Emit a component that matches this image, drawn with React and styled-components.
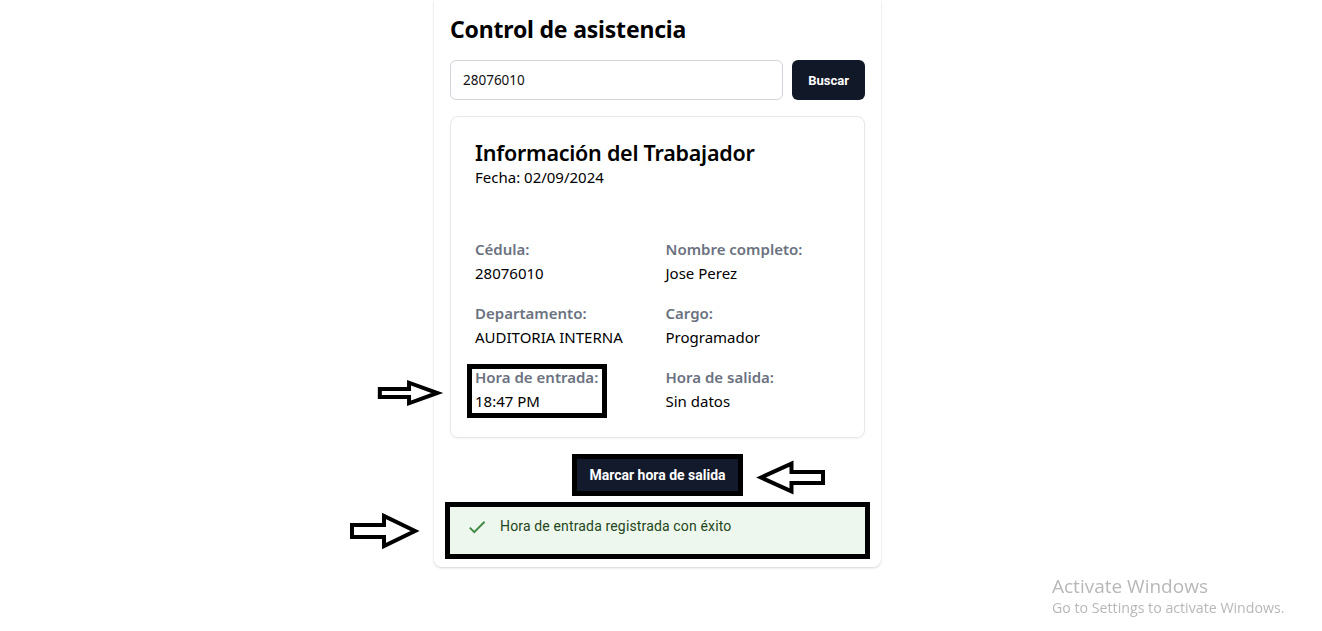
import styled, { createGlobalStyle } from 'styled-components'

//********************************************************//
/* ********************************************************* */
//Global + layout
/* ********************************************************* */

const GlobalStyle = createGlobalStyle`
  html, body {
    margin: 0;
    padding: 0;
    background: #ffffff;
  }
  body {
    font-family: "Noto Sans", "Open Sans", sans-serif;
    color: #000;
  }
`

const Page = styled.div`
  display: flex;
  justify-content: center;
  padding-right: 7px;
  min-height: 631px;
  box-sizing: border-box;
`

const Panel = styled.div`
  width: 447px;
  box-sizing: border-box;
  padding: 13px 16px 13px;
  background: #fff;
  border-radius: 0 0 8px 8px;
  box-shadow: 0 1px 3px rgba(0, 0, 0, 0.12), 0 1px 2px rgba(0, 0, 0, 0.06);
  display: flex;
  flex-direction: column;
  align-self: flex-start;
`

const Title = styled.h1`
  margin: 0;
  font-size: 23px;
  line-height: 32px;
  font-weight: 700;
  letter-spacing: -0.2px;
`

const SearchRow = styled.div`
  display: flex;
  gap: 9px;
  margin-top: 15px;
  height: 40px;
`

const SearchInput = styled.input`
  flex: 1;
  min-width: 0;
  box-sizing: border-box;
  height: 40px;
  border: 1px solid #d1d5db;
  border-radius: 6px;
  padding: 0 12px;
  font-family: "Noto Sans", sans-serif;
  font-size: 13.5px;
  color: #111;
  outline: none;
`

const DarkButton = styled.button`
  background: #111827;
  color: #fff;
  border: none;
  border-radius: 6px;
  font-family: Roboto, "Noto Sans", sans-serif;
  font-weight: 700;
  font-size: 13px;
  padding: 0 16px;
  height: 40px;
  cursor: pointer;
`

//********************************************************//
// Worker card
//********************************************************//

const Card = styled.div`
  margin-top: 16px;
  border: 1px solid #e5e7eb;
  border-radius: 8px;
  box-shadow: 0 1px 2px rgba(0, 0, 0, 0.05);
  padding: 24px 24px 24px;
`

const CardTitle = styled.h2`
  margin: 0;
  font-size: 21.5px;
  line-height: 24px;
  font-weight: 600;
  letter-spacing: -0.25px;
`

const CardDate = styled.div`
  margin-top: 2px;
  font-size: 15px;
  line-height: 20px;
`

const InfoGrid = styled.div`
  margin-top: 50px;
  display: grid;
  grid-template-columns: 1fr 1fr;
  column-gap: 16px;
  row-gap: 16px;
`

const Field = styled.div`
  position: relative;
`

const Highlight = styled.span`
  position: absolute;
  left: -8px;
  top: -1px;
  width: 140px;
  bottom: -5px;
  border: 5px solid #000;
  box-sizing: border-box;
  pointer-events: none;
`

const Label = styled.div`
  font-size: 15px;
  line-height: 24px;
  font-weight: 600;
  color: #6b7280;
`

const Value = styled.div`
  font-size: 15px;
  line-height: 24px;
`

//********************************************************//
// Action + alert
//********************************************************//

const ActionRow = styled.div`
  position: relative;
  display: flex;
  justify-content: center;
  margin-top: 16px;
`

const OutlinedButton = styled(DarkButton)`
  height: 42px;
  border: 5px solid #000;
  border-radius: 0;
  padding: 0 12px;
  font-size: 14px;
  background: #131a2b;
`

const Alert = styled.div`
  position: relative;
  margin-top: 11px;
  display: flex;
  align-items: flex-start;
  padding: 9px 16px 0;
  height: 47px;
  box-sizing: border-box;
  background: #edf7ed;
  color: #1e4620;
  font-family: Roboto, sans-serif;
  font-size: 14px;
  line-height: 20px;
  letter-spacing: 0.15px;
  outline: 5px solid #000;
  outline-offset: 0;
`

const AlertIcon = styled.svg`
  width: 22px;
  height: 22px;
  margin-right: 12px;
  fill: #2e7d32;
  opacity: 0.9;
  flex-shrink: 0;
`

const ArrowBox = styled.svg`
  position: absolute;
  left: ${(p) => p.$left}px;
  top: ${(p) => p.$top}px;
  width: ${(p) => p.$w}px;
  height: ${(p) => p.$h}px;
  transform: ${(p) => (p.$flip ? 'scaleX(-1)' : 'none')};
  overflow: visible;
`

const Watermark = styled.div`
  position: fixed;
  left: 1052px;
  top: 574px;
  color: #b8b8b8;
  font-family: "Open Sans", sans-serif;
  font-weight: 400;
`

const WatermarkTitle = styled.div`
  font-size: 19px;
  line-height: 24px;
`

const WatermarkText = styled.div`
  font-size: 14.2px;
  line-height: 20px;
`

//********************************************************//

const Arrow = ({ left, top, w, h, flip }) => (
  <ArrowBox
    $left={left}
    $top={top}
    $w={w}
    $h={h}
    $flip={flip}
    viewBox="0 0 69 38"
    preserveAspectRatio="none"
  >
    <polygon
      points="2,13 34,13 34,4 65,19 34,34 34,25 2,25"
      fill="#fff"
      stroke="#000"
      strokeWidth="4"
      vectorEffect="non-scaling-stroke"
      strokeLinejoin="miter"
    />
  </ArrowBox>
)

const fields = [
  { label: 'Cédula:', value: '28076010' },
  { label: 'Nombre completo:', value: 'Jose Perez' },
  { label: 'Departamento:', value: 'AUDITORIA INTERNA' },
  { label: 'Cargo:', value: 'Programador' },
  { label: 'Hora de entrada:', value: '18:47 PM', marked: true },
  { label: 'Hora de salida:', value: 'Sin datos' },
]

export default function App() {
  return (
    <>
      <GlobalStyle />
      <Page>
        <Panel>
          <Title>Control de asistencia</Title>
          <SearchRow>
            <SearchInput defaultValue="28076010" />
            <DarkButton>Buscar</DarkButton>
          </SearchRow>

          <Card>
            <CardTitle>Información del Trabajador</CardTitle>
            <CardDate>Fecha: 02/09/2024</CardDate>
            <InfoGrid>
              {fields.map((f) => (
                <Field key={f.label}>
                  <Label>{f.label}</Label>
                  <Value>{f.value}</Value>
                  {f.marked && (
                    <>
                      <Highlight />
                      <Arrow left={-97} top={15} w={63} h={26} />
                    </>
                  )}
                </Field>
              ))}
            </InfoGrid>
          </Card>

          <ActionRow>
            <OutlinedButton>Marcar hora de salida</OutlinedButton>
            <Arrow left={307} top={6} w={68} h={35} flip />
          </ActionRow>

          <Alert>
            <AlertIcon viewBox="0 0 24 24">
              <path d="M9 16.17 4.83 12l-1.42 1.41L9 19 21 7l-1.41-1.41z" />
            </AlertIcon>
            Hora de entrada registrada con éxito
            <Arrow left={-100} top={5} w={69} h={38} />
          </Alert>
        </Panel>
      </Page>
      <Watermark>
        <WatermarkTitle>Activate Windows</WatermarkTitle>
        <WatermarkText>Go to Settings to activate Windows.</WatermarkText>
      </Watermark>
    </>
  )
}
